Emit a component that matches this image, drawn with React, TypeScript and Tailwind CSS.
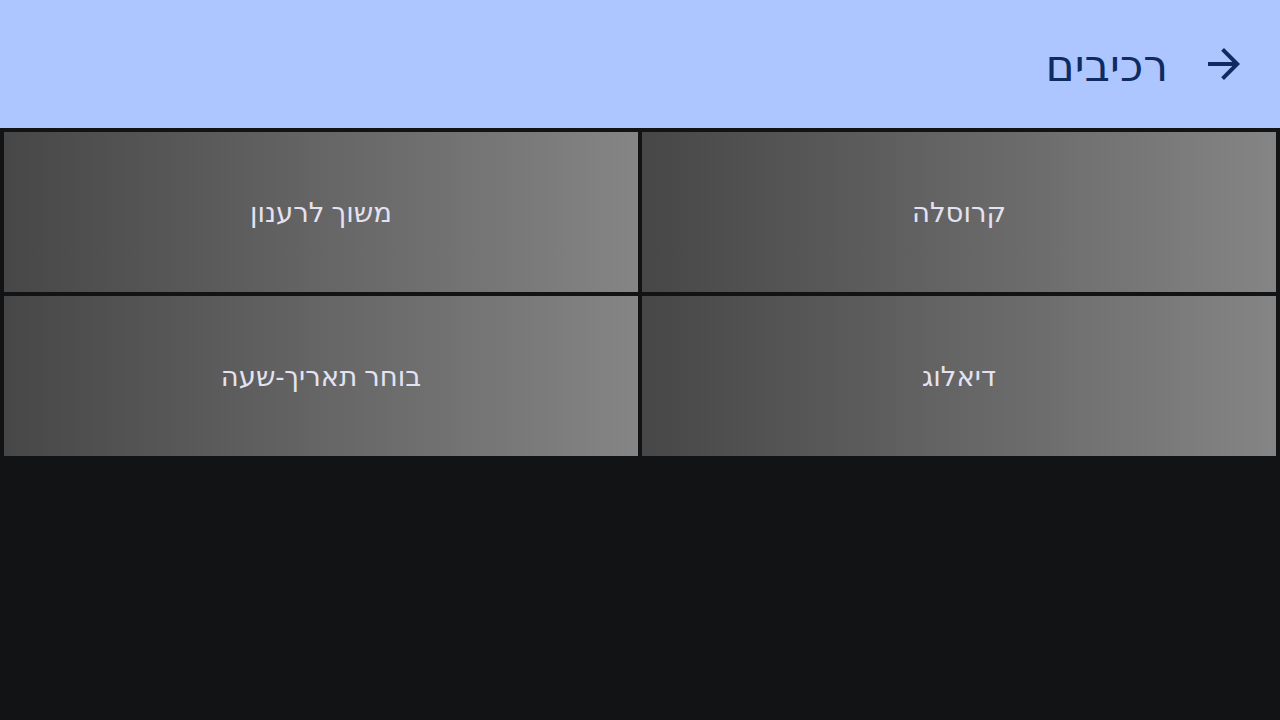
import React from "react";

const items = ["קרוסלה", "משוך לרענון", "דיאלוג", "בוחר תאריך-שעה"];

export default function App() {
  return (
    <div
      dir="rtl"
      className="w-[1280px] h-[720px] bg-[#121315] flex flex-col"
      style={{ fontFamily: '"Noto Sans", "DejaVu Sans", sans-serif' }}
    >
      <header className="h-[128px] bg-[#adc6ff] flex items-center pr-[32px] shrink-0">
        <svg width="48" height="48" viewBox="0 0 24 24" className="text-[#0f2b60]">
          <path
            fill="currentColor"
            d="M12 4l-1.41 1.41L16.17 11H4v2h12.17l-5.58 5.59L12 20l8-8z"
          />
        </svg>
        <h1 className="mr-[32px] text-[44px] leading-none text-[#0f2b60] font-normal">רכיבים</h1>
      </header>
      <div className="grid grid-cols-2 gap-[4px] p-[4px]">
        {items.map((t) => (
          <div
            key={t}
            className="h-[160px] flex items-center justify-center bg-gradient-to-r from-[#474747] to-[#858585] text-[#e4e2f2] text-[27.5px]"
          >
            {t}
          </div>
        ))}
      </div>
    </div>
  );
}
